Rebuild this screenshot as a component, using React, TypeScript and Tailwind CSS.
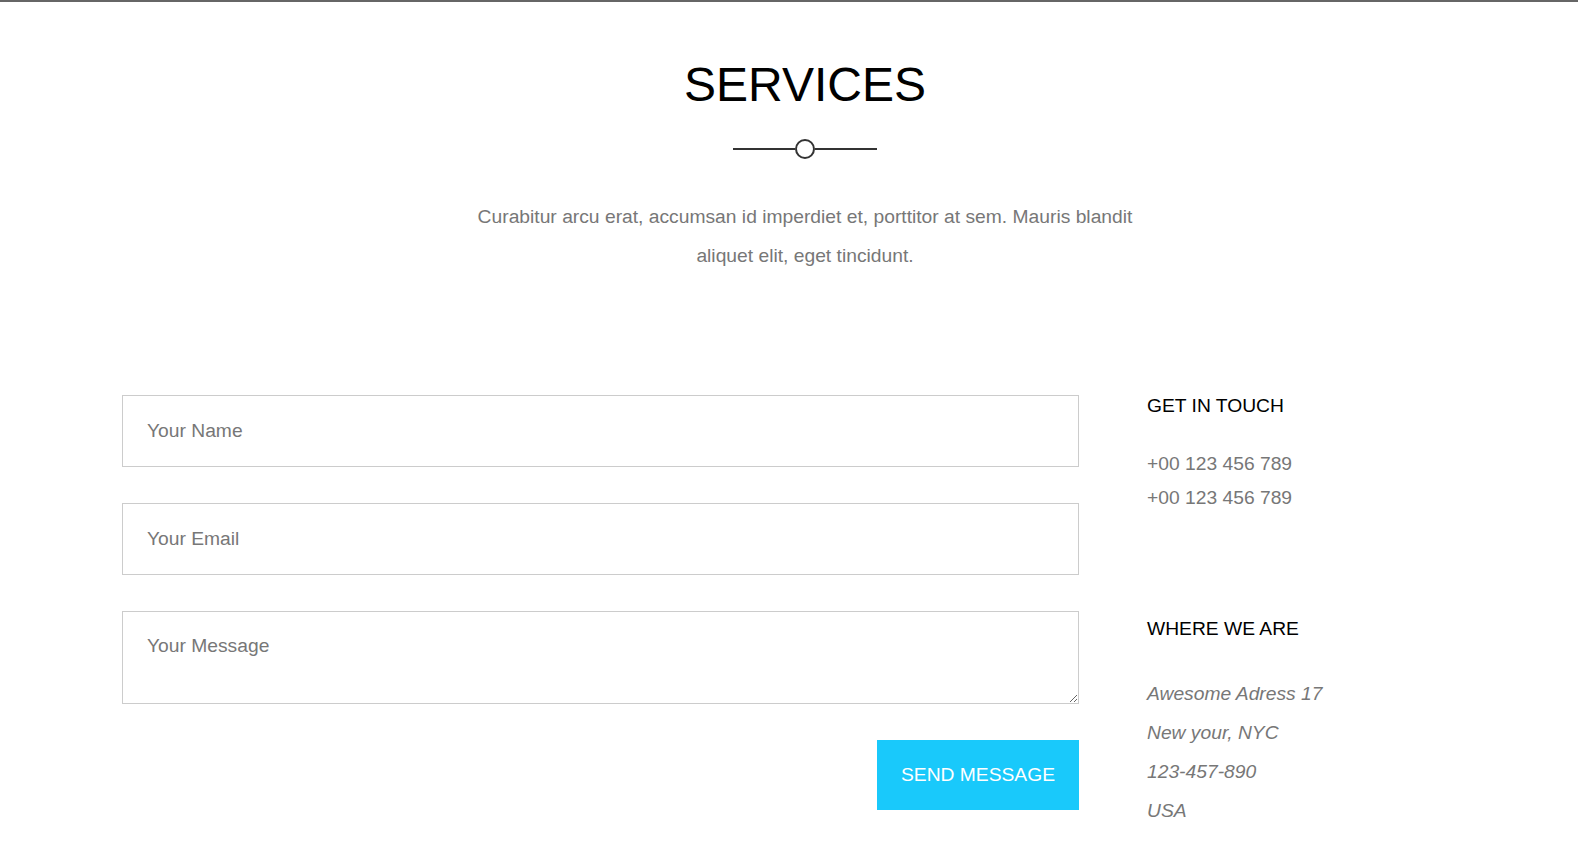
import React from "react";

const inputBox =
  "w-full border border-[#cccccc] bg-white px-[24px] text-[19.25px] text-[#555] outline-none placeholder:text-[#777]";

export default function App() {
  return (
    <div className="min-h-screen border-t-2 border-[#666666] bg-white font-['Liberation_Sans',Arial,sans-serif]">
      <section className="pl-[32px] pt-[59px] text-center">
        <h2 className="text-[48px] leading-[48px] font-normal text-black">SERVICES</h2>
        <div className="mt-[30px] flex h-[20px] items-center justify-center">
          <span className="h-[2px] w-[62px] bg-[#333333]" />
          <span className="h-[20px] w-[20px] rounded-full border-2 border-[#333333]" />
          <span className="h-[2px] w-[62px] bg-[#333333]" />
        </div>
        <p className="mx-auto mt-[38px] max-w-[690px] text-[19.25px] leading-[39px] text-[#777777]">
          Curabitur arcu erat, accumsan id imperdiet et, porttitor at sem. Mauris blandit aliquet elit, eget tincidunt.
        </p>
      </section>

      <div className="mt-[120px] flex items-start pl-[122px]">
        <form className="flex w-[957px] flex-col gap-[36px]" onSubmit={(e) => e.preventDefault()}>
          <input type="text" placeholder="Your Name" className={`${inputBox} h-[72px]`} />
          <input type="email" placeholder="Your Email" className={`${inputBox} h-[72px]`} />
          <textarea placeholder="Your Message" className={`${inputBox} block h-[93px] py-[22px] leading-[24px]`} />
          <div className="flex justify-end">
            <button
              type="submit"
              className="h-[70px] w-[202px] bg-[#19c9fb] text-[19.25px] text-white"
            >
              SEND MESSAGE
            </button>
          </div>
        </form>

        <aside className="ml-[68px] mt-px text-[19.25px]">
          <h3 className="leading-[19px] font-normal text-black">GET IN TOUCH</h3>
          <div className="mt-[32px] leading-[34px] text-[#777777]">
            <div>+00 123 456 789</div>
            <div>+00 123 456 789</div>
          </div>
          <h3 className="mt-[104px] leading-[19px] font-normal text-black">WHERE WE ARE</h3>
          <div className="mt-[36px] leading-[39px] italic text-[#777777]">
            <div>Awesome Adress 17</div>
            <div>New your, NYC</div>
            <div>123-457-890</div>
            <div>USA</div>
          </div>
        </aside>
      </div>
    </div>
  );
}
